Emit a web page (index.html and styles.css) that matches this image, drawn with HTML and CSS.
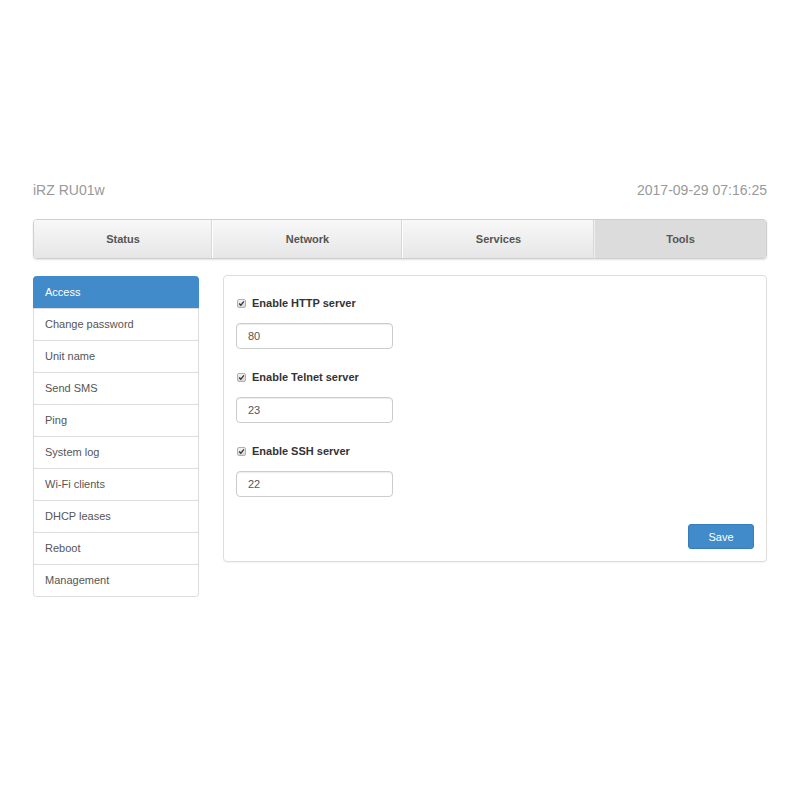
FILE: index.html
```html
<!DOCTYPE html>
<html>
<head>
<meta charset="utf-8">
<title>iRZ RU01w</title>
<link rel="stylesheet" href="styles.css">
</head>
<body>
<div class="page">
  <header class="top">
    <span class="brand">iRZ RU01w</span>
    <span class="clock">2017-09-29 07:16:25</span>
  </header>
  <nav class="tabs">
    <a class="tab">Status</a>
    <a class="tab">Network</a>
    <a class="tab">Services</a>
    <a class="tab active">Tools</a>
  </nav>
  <div class="main">
    <ul class="side">
      <li class="item active">Access</li>
      <li class="item">Change password</li>
      <li class="item">Unit name</li>
      <li class="item">Send SMS</li>
      <li class="item">Ping</li>
      <li class="item">System log</li>
      <li class="item">Wi-Fi clients</li>
      <li class="item">DHCP leases</li>
      <li class="item">Reboot</li>
      <li class="item">Management</li>
    </ul>
    <section class="panel">
      <div class="group">
        <label class="check"><span class="box"><svg viewBox="0 0 9 9"><path d="M1.5 4.6 L3.6 6.8 L7.6 1.8" fill="none" stroke="#333" stroke-width="1.7"/></svg></span>Enable HTTP server</label>
        <div class="field">80</div>
      </div>
      <div class="group">
        <label class="check"><span class="box"><svg viewBox="0 0 9 9"><path d="M1.5 4.6 L3.6 6.8 L7.6 1.8" fill="none" stroke="#333" stroke-width="1.7"/></svg></span>Enable Telnet server</label>
        <div class="field">23</div>
      </div>
      <div class="group last">
        <label class="check"><span class="box"><svg viewBox="0 0 9 9"><path d="M1.5 4.6 L3.6 6.8 L7.6 1.8" fill="none" stroke="#333" stroke-width="1.7"/></svg></span>Enable SSH server</label>
        <div class="field">22</div>
      </div>
      <div class="actions">
        <button class="save">Save</button>
      </div>
    </section>
  </div>
</div>
</body>
</html>
```
FILE: styles.css
```css
* { box-sizing: border-box; }
html, body { margin: 0; padding: 0; background: #fff; }
body { font-family: "Liberation Sans", Arial, sans-serif; font-size: 11px; color: #555; }

.page { width: 734px; margin: 0 auto; padding-top: 180px; }

.top { display: flex; justify-content: space-between; align-items: center; height: 20px; margin-bottom: 19px; font-size: 14px; color: #999; }

.tabs {
  display: grid;
  grid-template-columns: 178px 190px 192px 1fr;
  height: 40px;
  border: 1px solid #cfcfcf;
  border-radius: 4px;
  overflow: hidden;
  box-shadow: 0 1px 2px rgba(0,0,0,0.12);
}
.tab {
  display: flex; align-items: center; justify-content: center;
  font-weight: bold; font-size: 11px; color: #555;
  background: linear-gradient(#f8f8f8, #e6e6e6);
  border-left: 1px solid #fff;
  box-shadow: -1px 0 0 #d8d8d8;
}
.tab:first-child { border-left: none; box-shadow: none; }
.tab.active { background: #dcdcdc; border-left-color: #f0f0f0; }

.main { display: flex; align-items: flex-start; gap: 24px; margin-top: 16px; }

.side {
  list-style: none; margin: 1px 0 0; padding: 0;
  width: 166px;
  border: 1px solid #ddd; border-radius: 4px;
  box-shadow: 0 1px 1px rgba(0,0,0,0.05);
}
.item {
  height: 32px; line-height: 31px; padding-left: 11px;
  border-top: 1px solid #ddd; color: #555;
}
.item:first-child { border-top: none; }
.item.active { background: #428bca; color: #fff; margin: -1px -1px 0; padding-left: 12px; height: 32px; line-height: 32px; border-radius: 4px 4px 0 0; }

.panel {
  flex: 1;
  border: 1px solid #ddd; border-radius: 4px;
  padding: 19px 12px 12px;
  box-shadow: 0 1px 1px rgba(0,0,0,0.05);
}
.group { margin-bottom: 20px; }
.group.last { margin-bottom: 27px; }
.check { display: flex; align-items: center; height: 16px; font-weight: bold; color: #333; font-size: 11px; }
.box {
  display: inline-flex; align-items: center; justify-content: center;
  width: 9px; height: 9px; margin: 0 6px 0 1px;
  border: 1px solid #b0b0b0; border-radius: 2px;
  background: linear-gradient(#f2f2f2, #d8d8d8);
}
.box svg { width: 7px; height: 7px; display: block; }
.field {
  margin-top: 12px;
  width: 157px; height: 26px; line-height: 24px;
  border: 1px solid #ccc; border-radius: 4px;
  padding-left: 11px; color: #555; font-size: 11px;
  box-shadow: inset 0 1px 1px rgba(0,0,0,0.075);
}
.actions { display: flex; justify-content: flex-end; }
.save {
  width: 66px; height: 25px; padding: 0;
  font-family: inherit; font-size: 11px; color: #fff;
  background: #428bca; border: 1px solid #357ebd; border-radius: 3px;
}
```
